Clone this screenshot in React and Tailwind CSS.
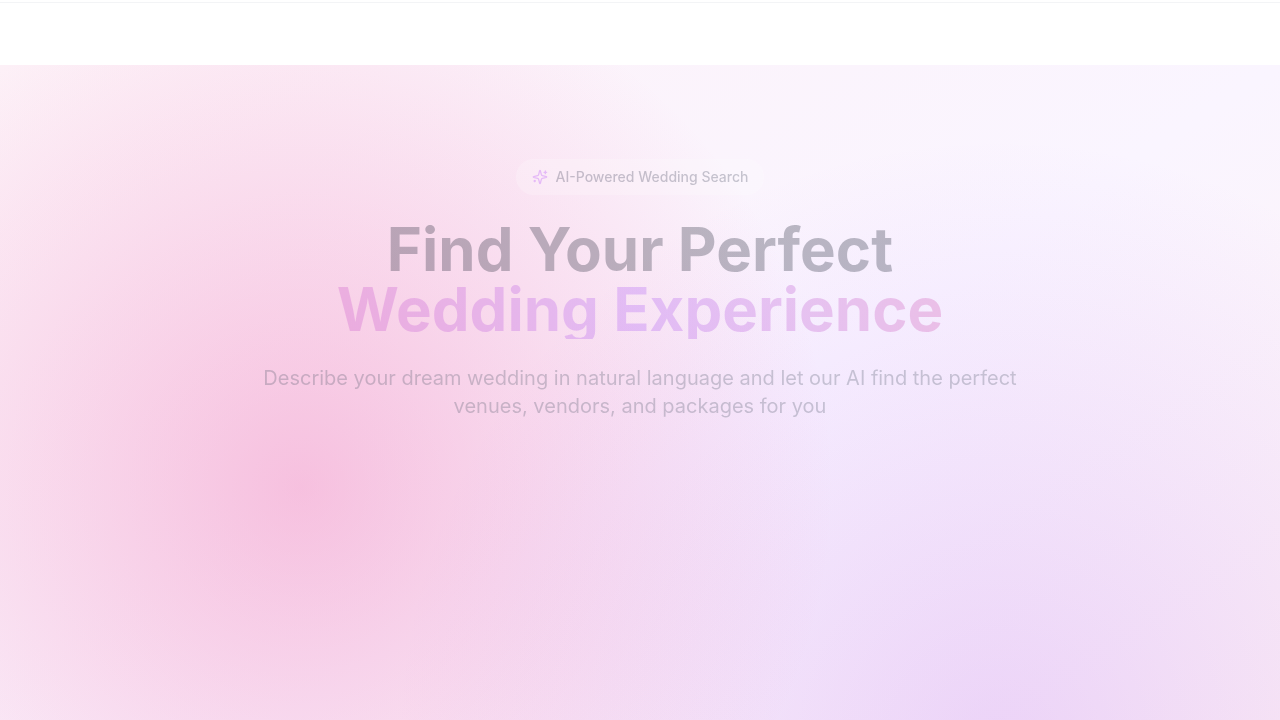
function SparklesIcon({ className }) {
  return (
    <svg
      className={className}
      viewBox="0 0 24 24"
      fill="none"
      stroke="currentColor"
      strokeWidth="2"
      strokeLinecap="round"
      strokeLinejoin="round"
      aria-hidden="true"
    >
      <path d="M9.937 15.5A2 2 0 0 0 8.5 14.063l-6.135-1.582a.5.5 0 0 1 0-.962L8.5 9.936A2 2 0 0 0 9.937 8.5l1.582-6.135a.5.5 0 0 1 .963 0L14.063 8.5A2 2 0 0 0 15.5 9.937l6.135 1.581a.5.5 0 0 1 0 .964L15.5 14.063a2 2 0 0 0-1.437 1.437l-1.582 6.135a.5.5 0 0 1-.963 0z" />
      <path d="M20 3v4" />
      <path d="M22 5h-4" />
      <path d="M4 17v2" />
      <path d="M5 18H3" />
    </svg>
  );
}

export default function App() {
  return (
    <div className="flex h-screen flex-col overflow-hidden bg-white font-['Inter',sans-serif] antialiased">
      <header className="h-[65px] shrink-0 pt-0.5">
        <div className="border-b border-gray-100" />
      </header>
      <main className="min-h-0 flex-1 overflow-hidden">
        <section className="min-h-[845px] bg-[radial-gradient(circle_at_23.5%_50%,rgba(236,72,153,0.3),transparent_50%),radial-gradient(circle_at_78%_80%,rgba(168,85,247,0.2),transparent_50%),linear-gradient(to_bottom_right,#fdf2f8,#faf5ff,#fff1f2)] px-8 pt-[94px]">
          <div className="flex flex-col items-center text-center opacity-[0.27]">
            <div className="mb-6 flex items-center gap-2 rounded-full bg-white/80 px-4 py-2">
              <SparklesIcon className="size-4 text-purple-500" />
              <span className="text-sm font-medium text-gray-700">AI-Powered Wedding Search</span>
            </div>
            <h1 className="mb-[25px] w-full text-6xl leading-none font-bold text-gray-900">
              <span className="block">Find Your Perfect</span>
              <span className="block bg-[linear-gradient(to_right,#ec4899,#a855f7,#f43f5e)] bg-clip-text text-transparent">
                Wedding Experience
              </span>
            </h1>
            <p className="max-w-3xl text-xl text-gray-600">
              Describe your dream wedding in natural language and let our AI find the perfect venues, vendors, and
              packages for you
            </p>
          </div>
        </section>
      </main>
    </div>
  );
}
